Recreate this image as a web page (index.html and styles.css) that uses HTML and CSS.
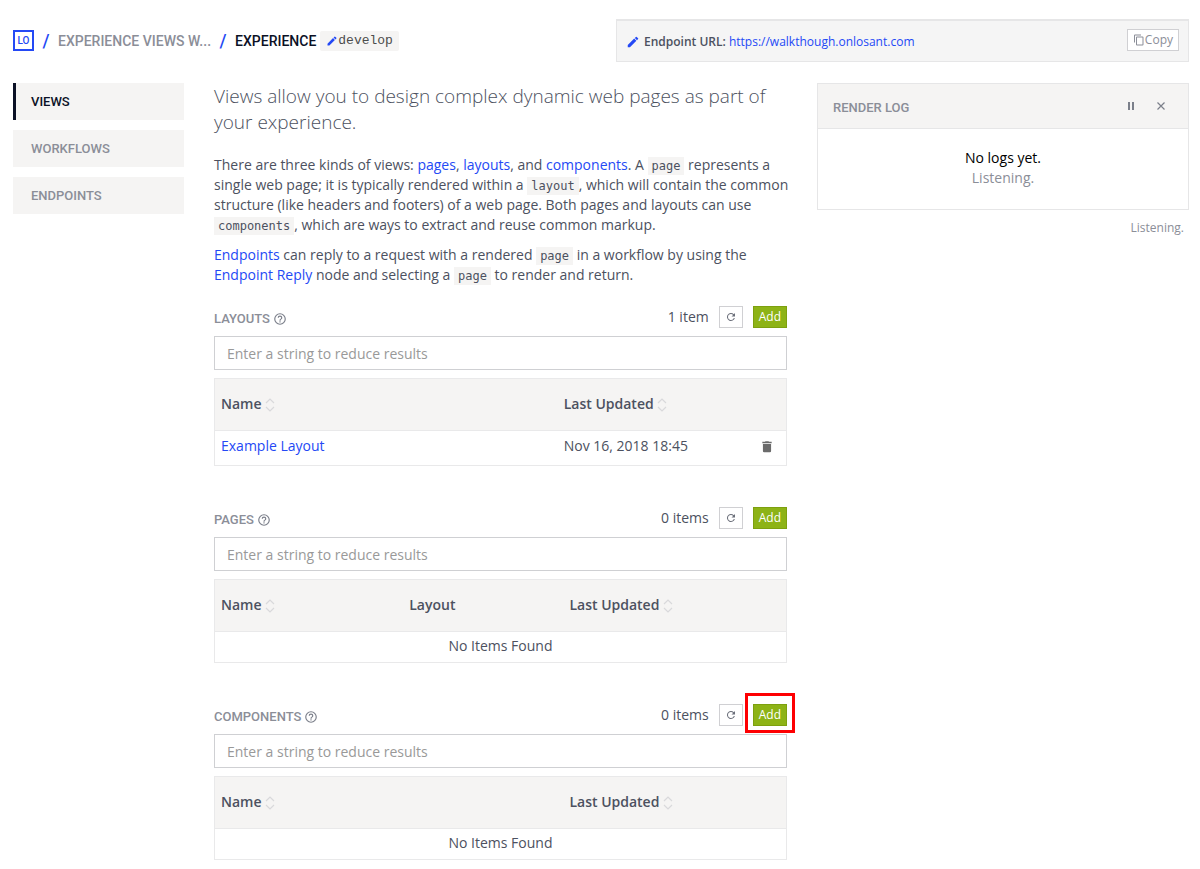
FILE: index.html
```html
<!DOCTYPE html>
<html lang="en">
<head>
<meta charset="utf-8">
<title>Experience Views</title>
<link rel="stylesheet" href="styles.css">
</head>
<body>
<svg class="defs" aria-hidden="true">
  <symbol id="pencil" viewBox="0 0 24 24"><path d="M3 17.25V21h3.75L17.81 9.94l-3.75-3.75L3 17.25zM20.71 7.04a1 1 0 0 0 0-1.41l-2.34-2.34a1 1 0 0 0-1.41 0l-1.83 1.83 3.75 3.75 1.83-1.83z"/></symbol>
  <symbol id="copy" viewBox="0 0 24 24"><path d="M16 1H4a2 2 0 0 0-2 2v14h2V3h12V1zm3 4H8a2 2 0 0 0-2 2v14a2 2 0 0 0 2 2h11a2 2 0 0 0 2-2V7a2 2 0 0 0-2-2zm0 16H8V7h11v14z"/></symbol>
  <symbol id="help" viewBox="0 0 24 24"><path d="M11 18h2v-2h-2v2zm1-16a10 10 0 1 0 0 20 10 10 0 0 0 0-20zm0 18a8 8 0 1 1 0-16 8 8 0 0 1 0 16zm0-14a4 4 0 0 0-4 4h2a2 2 0 1 1 4 0c0 2-3 1.750-3 5h2c0-2.250 3-2.500 3-5a4 4 0 0 0-4-4z"/></symbol>
  <symbol id="refresh" viewBox="0 0 24 24"><path d="M17.650 6.350A8 8 0 1 0 19.730 14h-2.080A6 6 0 1 1 12 6c1.660 0 3.140.690 4.220 1.780L13 11h7V4l-2.350 2.350z"/></symbol>
  <symbol id="sort" viewBox="0 0 10 14"><path d="M1 5 5 1 9 5M1 9 5 13 9 9" fill="none" stroke="currentColor" stroke-width="1.2"/></symbol>
  <symbol id="trash" viewBox="0 0 24 24"><path d="M5 19a2 2 0 0 0 2 2h10a2 2 0 0 0 2-2V7H5v12zM20 3h-4.500l-1-1h-5l-1 1H4v2.500h16V3z"/></symbol>
</svg>

<div class="page">
  <header class="grid top">
    <nav class="crumbs" aria-label="Breadcrumb">
      <a class="logo" href="#">LO</a>
      <span class="slash">/</span>
      <a class="crumb" href="#">EXPERIENCE VIEWS W...</a>
      <span class="slash">/</span>
      <span class="crumb current">EXPERIENCE</span>
      <button class="version" type="button"><svg class="icon12"><use href="#pencil"/></svg>develop</button>
    </nav>
    <div class="endpoint">
      <svg class="icon14 blue"><use href="#pencil"/></svg>
      <span class="endpoint-text"><strong>Endpoint URL:</strong> <a href="#">https://walkthough.onlosant.com</a></span>
      <button class="copy" type="button"><svg class="icon12"><use href="#copy"/></svg>Copy</button>
    </div>
  </header>

  <div class="grid">
    <nav class="side" aria-label="Experience">
      <a class="active" href="#">VIEWS</a>
      <a href="#">WORKFLOWS</a>
      <a href="#">ENDPOINTS</a>
    </nav>

    <main class="main">
      <p class="lead">Views allow you to design complex dynamic web pages as part of<br>your experience.</p>
      <p>There are three kinds of views: <a href="#">pages</a>, <a href="#">layouts</a>, and <a href="#">components</a>. A <code>page</code> represents a<br>single web page; it is typically rendered within a <code>layout</code>, which will contain the common<br>structure (like headers and footers) of a web page. Both pages and layouts can use<br><code>components</code>, which are ways to extract and reuse common markup.</p>
      <p><a href="#">Endpoints</a> can reply to a request with a rendered <code>page</code> in a workflow by using the<br><a href="#">Endpoint Reply</a> node and selecting a <code>page</code> to render and return.</p>

      <section class="list">
        <div class="list-head">
          <h2>LAYOUTS</h2><svg class="icon14 help"><use href="#help"/></svg>
          <span class="count">1 item</span>
          <button class="refresh" type="button" aria-label="Refresh layouts"><svg class="icon12"><use href="#refresh"/></svg></button>
          <button class="add" type="button">Add</button>
        </div>
        <input type="text" aria-label="Filter layouts" placeholder="Enter a string to reduce results">
        <table>
          <colgroup><col class="c-wide"><col><col class="c-action"></colgroup>
          <thead><tr><th>Name <svg class="sort"><use href="#sort"/></svg></th><th>Last Updated <svg class="sort"><use href="#sort"/></svg></th><th></th></tr></thead>
          <tbody><tr class="item"><td><a href="#">Example Layout</a></td><td>Nov 16, 2018 18:45</td><td><button class="delete" type="button" aria-label="Delete Example Layout"><svg class="icon14"><use href="#trash"/></svg></button></td></tr></tbody>
        </table>
      </section>

      <section class="list">
        <div class="list-head">
          <h2>PAGES</h2><svg class="icon14 help"><use href="#help"/></svg>
          <span class="count">0 items</span>
          <button class="refresh" type="button" aria-label="Refresh pages"><svg class="icon12"><use href="#refresh"/></svg></button>
          <button class="add" type="button">Add</button>
        </div>
        <input type="text" aria-label="Filter pages" placeholder="Enter a string to reduce results">
        <table>
          <colgroup><col class="c-name"><col class="c-layout"><col></colgroup>
          <thead><tr><th>Name <svg class="sort"><use href="#sort"/></svg></th><th>Layout</th><th>Last Updated <svg class="sort"><use href="#sort"/></svg></th></tr></thead>
          <tbody><tr><td class="none" colspan="3">No Items Found</td></tr></tbody>
        </table>
      </section>

      <section class="list">
        <div class="list-head">
          <h2>COMPONENTS</h2><svg class="icon14 help"><use href="#help"/></svg>
          <span class="count">0 items</span>
          <button class="refresh" type="button" aria-label="Refresh components"><svg class="icon12"><use href="#refresh"/></svg></button>
          <button class="add marked" type="button">Add</button>
        </div>
        <input type="text" aria-label="Filter components" placeholder="Enter a string to reduce results">
        <table>
          <colgroup><col class="c-half"><col></colgroup>
          <thead><tr><th>Name <svg class="sort"><use href="#sort"/></svg></th><th>Last Updated <svg class="sort"><use href="#sort"/></svg></th></tr></thead>
          <tbody><tr><td class="none" colspan="2">No Items Found</td></tr></tbody>
        </table>
      </section>
    </main>

    <aside class="log">
      <div class="log-box">
        <div class="log-head">
          <h2>RENDER LOG</h2>
          <button type="button" aria-label="Pause"><svg class="icon12" viewBox="0 0 12 12"><path d="M3 2h2v8H3zM7 2h2v8H7z"/></svg></button>
          <button type="button" aria-label="Clear"><svg class="icon12" viewBox="0 0 12 12"><path d="M2.500 2.500l7 7M9.500 2.500l-7 7" fill="none" stroke="currentColor" stroke-width="1.200"/></svg></button>
        </div>
        <div class="log-body"><div class="log-title">No logs yet.</div>Listening.</div>
      </div>
      <div class="log-status">Listening.</div>
    </aside>
  </div>
</div>
</body>
</html>
```
FILE: styles.css
```css
* { box-sizing: border-box; }
body {
  margin: 0;
  background: #fff;
  color: #4c5160;
  font: 14px/20px "Open Sans", sans-serif;
}
a { color: #2449f5; text-decoration: none; }
button { font: inherit; cursor: pointer; margin: 0; }
svg { fill: currentColor; flex: none; }
p { margin: 0 0 10px; white-space: nowrap; }
h2 {
  margin: 0;
  color: #8b8e98;
  font: 500 13px/20px "Roboto", sans-serif;
}
.defs { display: none; }
.icon12 { width: 12px; height: 12px; }
.icon14 { width: 14px; height: 14px; }
.blue { color: #2449f5; }

.page { padding: 19px 11px 0 13px; }
.grid {
  display: grid;
  grid-template-columns: repeat(12, minmax(0, 1fr));
  column-gap: 30px;
  align-items: start;
}

.top { margin-bottom: 21px; }
.crumbs {
  grid-column: span 6;
  display: flex;
  align-items: center;
  height: 43px;
  white-space: nowrap;
  font: 500 14px/20px "Roboto", sans-serif;
}
.logo {
  width: 21px;
  height: 21px;
  border: 2px solid #2449f5;
  font-size: 10px;
  line-height: 17px;
  text-align: center;
}
.slash { width: 24px; color: #2449f5; font-size: 18px; text-align: center; }
.crumb { color: #8b8e98; }
.crumb.current { color: #0b1126; }
.version {
  display: flex;
  align-items: center;
  height: 20px;
  margin-left: 4px;
  padding: 0 6px;
  border: 0;
  border-radius: 2px;
  background: #f5f4f3;
  color: #4c4c4c;
  font: 13px/20px "Liberation Mono", monospace;
}
.version svg { color: #2449f5; }
.endpoint {
  grid-column: span 6;
  display: flex;
  align-items: center;
  gap: 4px;
  height: 43px;
  padding: 2px 9px 0;
  border: 1px solid #e6e6e7;
  border-top-width: 2px;
  background: #f5f5f5;
  font-size: 12px;
}
.endpoint strong { font-weight: 600; }
.endpoint-text { flex: 1; }
.copy {
  display: flex;
  align-items: center;
  height: 22px;
  margin-bottom: 4px;
  padding: 0 5px;
  border: 1px solid #d0d0d3;
  background: #fff;
  color: #8b8e98;
}

.side { grid-column: span 2; display: flex; flex-direction: column; gap: 10px; }
.side a {
  height: 37px;
  padding: 0 18px;
  background: #f5f4f3;
  color: #8b8e98;
  font: 500 13px/37px "Roboto", sans-serif;
}
.side .active { padding-left: 15px; border-left: 3px solid #0b1126; color: #0b1126; }

.main { grid-column: span 6; min-width: 0; }
.lead { margin-bottom: 20px; font-size: 19px; line-height: 26px; font-weight: 300; }
code {
  padding: 2px 4px;
  background: #f5f4f3;
  font: 12px/14px "DejaVu Sans Mono", monospace;
}

.list { margin-top: 41px; }
p + .list { margin-top: 21px; }
.list-head { display: flex; align-items: center; height: 22px; margin-bottom: 8px; }
.list-head h2 { padding-top: 4px; }
.help { margin: 4px 0 0 3px; color: #7b7f8a; }
.count { margin-left: auto; }
.refresh {
  display: grid;
  place-items: center;
  width: 24px;
  height: 22px;
  margin: 0 10px;
  padding: 0;
  border: 1px solid #d0d0d3;
  background: #fff;
  color: #6b6f7a;
}
.add {
  position: relative;
  height: 22px;
  padding: 0 5px;
  border: 1px solid #7da00f;
  background: #8db316;
  color: #fff;
  font-size: 12px;
  line-height: 20px;
}
.marked::after {
  content: "";
  position: absolute;
  inset: -12px -9px -8px;
  border: 3px solid #fe0002;
}
input {
  display: block;
  width: 100%;
  height: 34px;
  margin-bottom: 8px;
  padding: 0 12px;
  border: 1px solid #cfd0d3;
  border-radius: 0;
  background: #fff;
  color: #4c5160;
  font: inherit;
}
input::placeholder { color: #999; opacity: 1; }
table {
  width: 100%;
  table-layout: fixed;
  border-collapse: collapse;
  border: 1px solid #e9e9ea;
}
.c-wide { width: 60%; }
.c-action { width: 38px; }
.c-name { width: 33%; }
.c-layout { width: 28%; }
.c-half { width: 61%; }
th, td { padding: 0 6px 2px; text-align: left; }
th { height: 52px; background: #f5f4f3; border-bottom: 1px solid #e9e9ea; font-weight: 600; }
td { height: 31px; }
.item td { height: 35px; padding-bottom: 5px; }
td.none { text-align: center; }
.sort { width: 10px; height: 14px; color: #d9d9db; vertical-align: -3px; }
.delete {
  display: block;
  margin: 3px auto 0;
  padding: 0;
  border: 0;
  background: none;
  color: #6b6b6b;
}
.delete svg { display: block; }

.log { grid-column: span 4; color: #8b8e98; }
.log-box { border: 1px solid #e6e6e7; }
.log-head {
  display: flex;
  align-items: center;
  gap: 18px;
  height: 45px;
  padding: 0 21px 0 15px;
  border-bottom: 1px solid #e6e6e7;
  background: #f5f4f3;
}
.log-head h2 { flex: 1; padding-top: 4px; }
.log-head button { display: flex; padding: 0; border: 0; background: none; color: #7b7f8a; }
.log-body { padding: 19px 0 21px; text-align: center; }
.log-title { color: #000; }
.log-status { padding: 8px 5px; font-size: 12px; text-align: right; }
```
